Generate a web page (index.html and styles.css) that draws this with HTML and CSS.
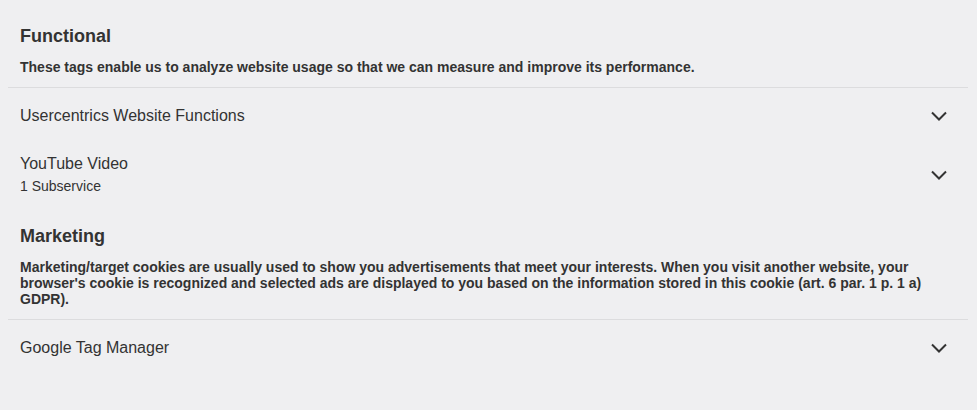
FILE: index.html
```html
<!DOCTYPE html>
<html lang="en">
<head>
<meta charset="utf-8">
<link rel="stylesheet" href="styles.css">
</head>
<body>
<div class="panel">
  <section class="category">
    <header class="cat-head">
      <h2 class="cat-title">Functional</h2>
      <p class="cat-desc">These tags enable us to analyze website usage so that we can measure and improve its performance.</p>
    </header>
    <div class="services">
      <div class="service">
        <div class="service-text"><div class="service-name">Usercentrics Website Functions</div></div>
        <svg class="chev" width="16" height="10" viewBox="0 0 16 10"><path d="M1 1.5 L8 8.5 L15 1.5" fill="none" stroke="#333" stroke-width="2"/></svg>
      </div>
      <div class="service">
        <div class="service-text"><div class="service-name">YouTube Video</div><div class="service-sub">1 Subservice</div></div>
        <svg class="chev" width="16" height="10" viewBox="0 0 16 10"><path d="M1 1.5 L8 8.5 L15 1.5" fill="none" stroke="#333" stroke-width="2"/></svg>
      </div>
    </div>
  </section>
  <section class="category">
    <header class="cat-head">
      <h2 class="cat-title">Marketing</h2>
      <p class="cat-desc">Marketing/target cookies are usually used to show you advertisements that meet your interests. When you visit another website, your browser's cookie is recognized and selected ads are displayed to you based on the information stored in this cookie (art. 6 par. 1 p. 1 a) GDPR).</p>
    </header>
    <div class="services">
      <div class="service">
        <div class="service-text"><div class="service-name">Google Tag Manager</div></div>
        <svg class="chev" width="16" height="10" viewBox="0 0 16 10"><path d="M1 1.5 L8 8.5 L15 1.5" fill="none" stroke="#333" stroke-width="2"/></svg>
      </div>
    </div>
  </section>
</div>
</body>
</html>
```

FILE: styles.css
```css
html, body {
  margin: 0;
  padding: 0;
  background: #efeff1;
}
body {
  font-family: "Liberation Sans", Arial, sans-serif;
  color: #333;
  height: 410px;
  overflow: hidden;
}
.panel {
  width: 960px;
  margin-left: 8px;
  padding-top: 25px;
}
.category + .category {
  margin-top: 16px;
}
.cat-head {
  padding: 0 12px 12px;
  border-bottom: 1px solid #dcdcde;
}
.cat-title {
  margin: 0;
  font-size: 18px;
  line-height: 22px;
  font-weight: 700;
}
.cat-desc {
  margin: 12px 0 0;
  font-size: 14px;
  line-height: 16px;
  font-weight: 700;
  padding-right: 12px;
}
.services {
  padding-top: 4px;
}
.service {
  display: flex;
  align-items: center;
  justify-content: space-between;
  padding: 14px 21px 13px 12px;
}
.service:last-child {
  padding-bottom: 14px;
}
.service + .service {
  padding-top: 15px;
}
.service-name {
  font-size: 16px;
  line-height: 20px;
}
.service-sub {
  margin-top: 3px;
  font-size: 14px;
  line-height: 18px;
}
.chev {
  display: block;
  flex: none;
}
```
